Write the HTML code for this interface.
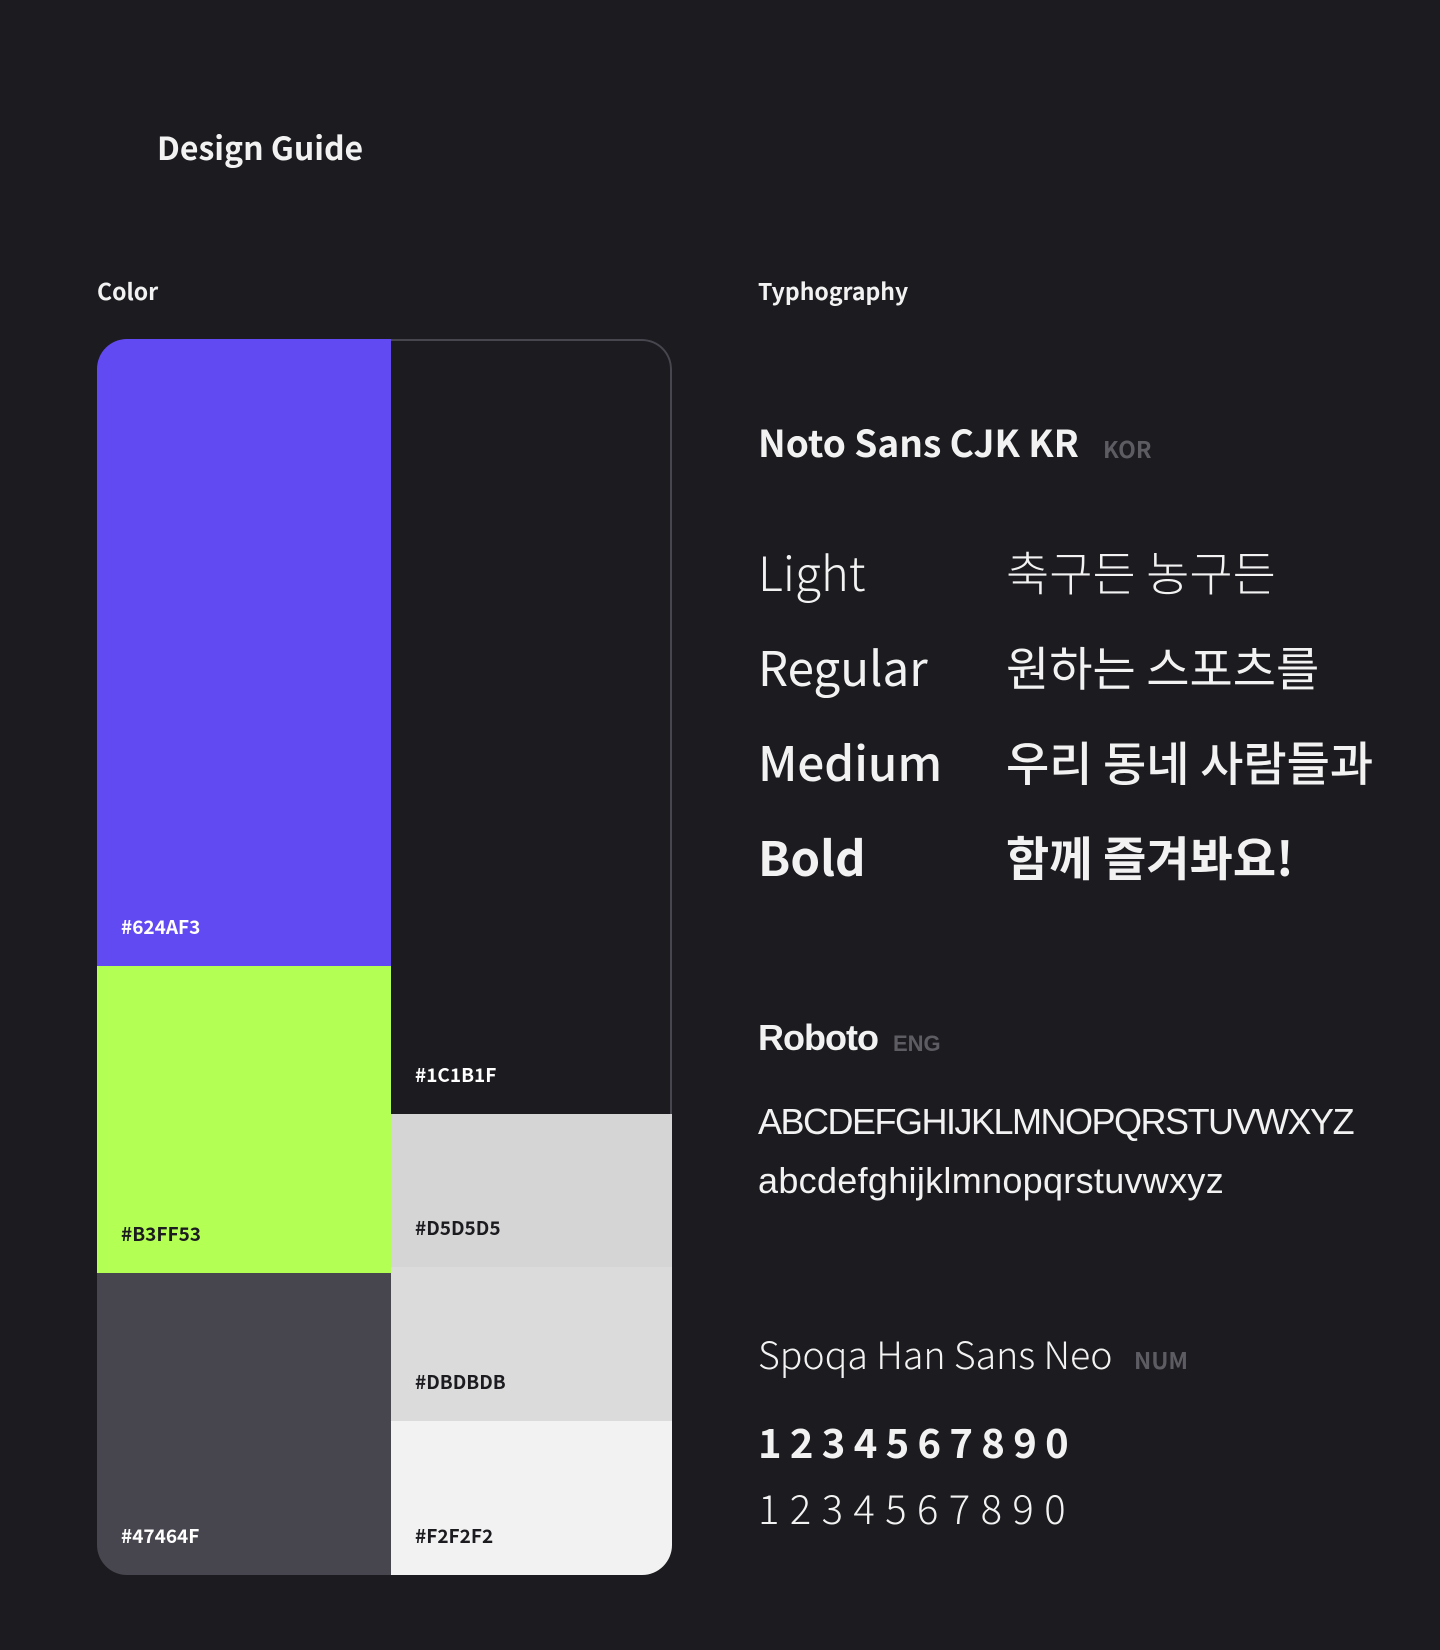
<!DOCTYPE html>
<html><head><meta charset="utf-8"><style>
*{margin:0;padding:0;box-sizing:border-box}
body{width:1440px;height:1650px;background:#1C1B1F;position:relative;overflow:hidden;font-family:"Noto Sans CJK KR","Liberation Sans",sans-serif;color:#F2F2F2}
.a{position:absolute;line-height:1;white-space:nowrap}
.card{position:absolute;left:97px;top:339px;width:575px;height:1236px;border-radius:30px;overflow:hidden}
.sw{position:absolute}
.lb{position:absolute;left:24px;bottom:30px;font-size:19px;font-weight:700;line-height:1}
.gray{color:#5d5c63;font-weight:700}
</style></head><body>
<div class="a" style="left:157px;top:131px;font-size:32px;font-weight:700">Design Guide</div>
<div class="a" style="left:97px;top:279px;font-size:23px;font-weight:700">Color</div>
<div class="a" style="left:758px;top:279px;font-size:23px;font-weight:700">Typhography</div>

<div class="card">
 <div class="sw" style="left:0;top:0;width:294px;height:627px;background:#624AF3"><div class="lb" style="color:#fff">#624AF3</div></div>
 <div class="sw" style="left:0;top:627px;width:294px;height:307px;background:#B3FF53"><div class="lb" style="color:#1C1B1F">#B3FF53</div></div>
 <div class="sw" style="left:0;top:934px;width:294px;height:302px;background:#47464F"><div class="lb" style="color:#fff">#47464F</div></div>
 <div class="sw" style="left:294px;top:0;width:281px;height:775px;background:#1C1B1F;border-top:2px solid #47464F;border-right:2px solid #47464F;border-top-right-radius:30px"><div class="lb" style="color:#fff">#1C1B1F</div></div>
 <div class="sw" style="left:294px;top:775px;width:281px;height:153px;background:#D5D5D5"><div class="lb" style="color:#1C1B1F">#D5D5D5</div></div>
 <div class="sw" style="left:294px;top:928px;width:281px;height:154px;background:#DBDBDB"><div class="lb" style="color:#1C1B1F">#DBDBDB</div></div>
 <div class="sw" style="left:294px;top:1082px;width:281px;height:154px;background:#F2F2F2"><div class="lb" style="color:#1C1B1F">#F2F2F2</div></div>
</div>

<div class="a" style="left:758px;top:423px;font-size:37px;font-weight:700">Noto Sans CJK KR</div>
<div class="a gray" style="left:1103px;top:437px;font-size:23px">KOR</div>

<div class="a" style="left:758px;top:547px;font-size:47.5px;font-weight:300">Light</div>
<div class="a" style="left:1006px;top:547px;font-size:47px;font-weight:300">축구든 농구든</div>
<div class="a" style="left:758px;top:642px;font-size:47.5px;font-weight:400">Regular</div>
<div class="a" style="left:1006px;top:642px;font-size:47px;font-weight:400">원하는 스포츠를</div>
<div class="a" style="left:758px;top:737px;font-size:47.5px;font-weight:500">Medium</div>
<div class="a" style="left:1006px;top:737px;font-size:47px;font-weight:500">우리 동네 사람들과</div>
<div class="a" style="left:758px;top:832px;font-size:47.5px;font-weight:700">Bold</div>
<div class="a" style="left:1006px;top:832px;font-size:47px;font-weight:700">함께 즐겨봐요!</div>

<div class="a" style="left:758px;top:1020px;font-size:36px;font-weight:700;font-family:'Liberation Sans',sans-serif;letter-spacing:-1px">Roboto</div>
<div class="a gray" style="left:893px;top:1033px;font-size:22px;font-family:'Liberation Sans',sans-serif">ENG</div>
<div class="a" style="left:758px;top:1104px;font-size:36px;font-family:'Liberation Sans',sans-serif;letter-spacing:-1.5px">ABCDEFGHIJKLMNOPQRSTUVWXYZ</div>
<div class="a" style="left:758px;top:1163px;font-size:36px;font-family:'Liberation Sans',sans-serif;letter-spacing:0.3px">abcdefghijklmnopqrstuvwxyz</div>

<div class="a" style="left:758px;top:1334px;font-size:37.5px;font-weight:300">Spoqa Han Sans Neo</div>
<div class="a gray" style="left:1134px;top:1348px;font-size:23px">NUM</div>
<div class="a" style="left:758px;top:1421px;font-size:40px;font-weight:700;letter-spacing:8.3px">1234567890</div>
<div class="a" style="left:758px;top:1487px;font-size:40px;font-weight:300;letter-spacing:10.4px">1234567890</div>
</body></html>
